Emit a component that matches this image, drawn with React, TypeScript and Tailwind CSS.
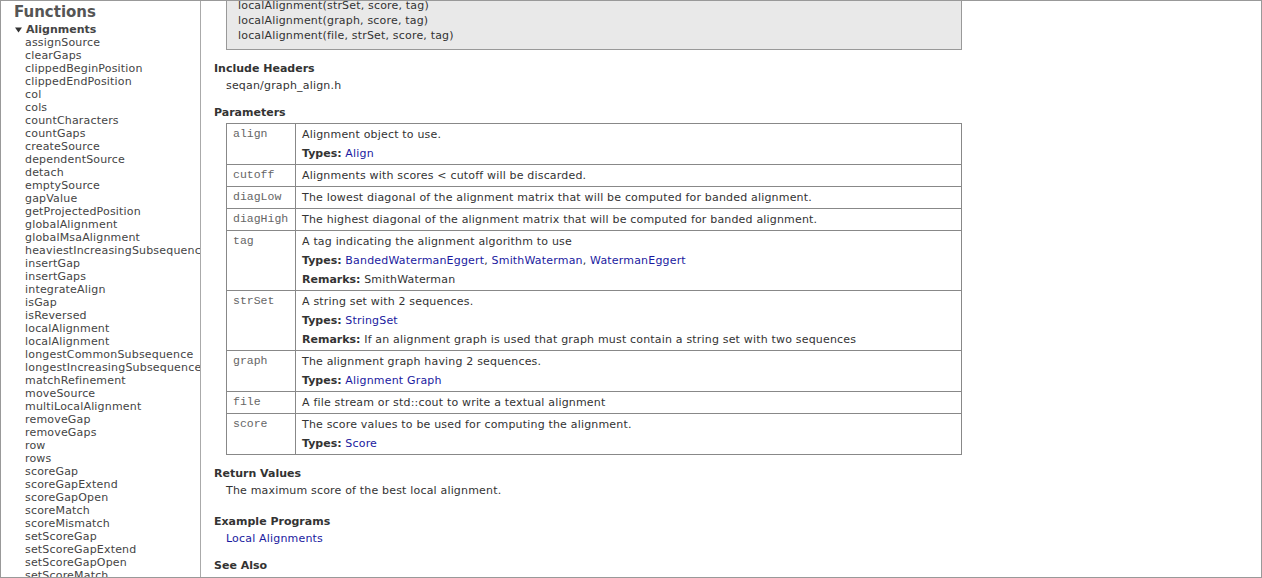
import React from "react";

const fns = [
  "assignSource",
  "clearGaps",
  "clippedBeginPosition",
  "clippedEndPosition",
  "col",
  "cols",
  "countCharacters",
  "countGaps",
  "createSource",
  "dependentSource",
  "detach",
  "emptySource",
  "gapValue",
  "getProjectedPosition",
  "globalAlignment",
  "globalMsaAlignment",
  "heaviestIncreasingSubsequence",
  "insertGap",
  "insertGaps",
  "integrateAlign",
  "isGap",
  "isReversed",
  "localAlignment",
  "localAlignment",
  "longestCommonSubsequence",
  "longestIncreasingSubsequence",
  "matchRefinement",
  "moveSource",
  "multiLocalAlignment",
  "removeGap",
  "removeGaps",
  "row",
  "rows",
  "scoreGap",
  "scoreGapExtend",
  "scoreGapOpen",
  "scoreMatch",
  "scoreMismatch",
  "setScoreGap",
  "setScoreGapExtend",
  "setScoreGapOpen",
  "setScoreMatch",
  "setScoreMismatch",
];

type Param = {
  name: string;
  desc: string;
  types?: string[];
  remarks?: string;
};

const params: Param[] = [
  { name: "align", desc: "Alignment object to use.", types: ["Align"] },
  { name: "cutoff", desc: "Alignments with scores < cutoff will be discarded." },
  {
    name: "diagLow",
    desc: "The lowest diagonal of the alignment matrix that will be computed for banded alignment.",
  },
  {
    name: "diagHigh",
    desc: "The highest diagonal of the alignment matrix that will be computed for banded alignment.",
  },
  {
    name: "tag",
    desc: "A tag indicating the alignment algorithm to use",
    types: ["BandedWatermanEggert", "SmithWaterman", "WatermanEggert"],
    remarks: "SmithWaterman",
  },
  {
    name: "strSet",
    desc: "A string set with 2 sequences.",
    types: ["StringSet"],
    remarks:
      "If an alignment graph is used that graph must contain a string set with two sequences",
  },
  {
    name: "graph",
    desc: "The alignment graph having 2 sequences.",
    types: ["Alignment Graph"],
  },
  { name: "file", desc: "A file stream or std::cout to write a textual alignment" },
  {
    name: "score",
    desc: "The score values to be used for computing the alignment.",
    types: ["Score"],
  },
];

const sans = "font-['DejaVu_Sans',Verdana,sans-serif]";

function Heading({ children, className }: { children: React.ReactNode; className: string }) {
  return (
    <h3 className={`font-bold text-[11px] leading-[14px] tracking-normal text-[#333] ${className}`}>
      {children}
    </h3>
  );
}

export default function App() {
  return (
    <div className={`flex h-[578px] w-full overflow-hidden border border-[#999] bg-white ${sans}`}>
      {/* sidebar */}
      <aside className="w-[200px] shrink-0 overflow-hidden border-r border-[#aaa] pl-[13px] pt-[2px] whitespace-nowrap">
        <h2 className="text-[15px] leading-[18px] font-bold text-[#555]">Functions</h2>
        <div className="mt-[2px] flex items-center text-[11px] leading-[13px] font-bold text-[#444]">
          <svg width="8" height="6" viewBox="0 0 8 6" className="ml-[1px] mr-[3px]">
            <path d="M0 0.5 L7 0.5 L3.5 5.5 Z" fill="#333" />
          </svg>
          Alignments
        </div>
        <ul className="pl-[11px] text-[11px] leading-[13px] tracking-[0.18px] text-[#444]">
          {fns.map((f, i) => (
            <li key={i}>{f}</li>
          ))}
        </ul>
      </aside>

      {/* main */}
      <main className="flex-1 overflow-hidden pl-[13px] text-[11px] tracking-[0.18px] text-[#333]">
        <div className="w-[748px]">
          <div className="ml-[12px] -mt-[26px] border border-[#999] bg-[#e9e9e9] pl-[11px] pt-[7px] pb-[6px] leading-[15px]">
            <div>localAlignment(align, score, tag)</div>
            <div>localAlignment(strSet, score, tag)</div>
            <div>localAlignment(graph, score, tag)</div>
            <div>localAlignment(file, strSet, score, tag)</div>
          </div>

          <Heading className="mt-[12px]">Include Headers</Heading>
          <p className="ml-[12px] mt-[3px] leading-[14px]">seqan/graph_align.h</p>

          <Heading className="mt-[13px]">Parameters</Heading>
          <table className="ml-[12px] mt-[3px] w-[736px] border-collapse leading-[13px]">
            <tbody>
              {params.map((p) => (
                <tr key={p.name}>
                  <td className="w-[69px] border border-[#888] px-[6px] pt-[3px] pb-[4px] align-top font-['Liberation_Mono',monospace] text-[11.5px] tracking-normal text-[#666]">
                    {p.name}
                  </td>
                  <td className="border border-[#888] px-[6px] pt-[4px] pb-[4px] align-top">
                    <div>{p.desc}</div>
                    {p.types && (
                      <div className="mt-[6px]">
                        <b className="tracking-normal">Types:</b>{" "}
                        {p.types.map((t, i) => (
                          <React.Fragment key={t}>
                            {i > 0 && ", "}
                            <a className="text-[#1a1aa0]">{t}</a>
                          </React.Fragment>
                        ))}
                      </div>
                    )}
                    {p.remarks && (
                      <div className="mt-[6px]">
                        <b className="tracking-normal">Remarks:</b> {p.remarks}
                      </div>
                    )}
                  </td>
                </tr>
              ))}
            </tbody>
          </table>

          <Heading className="mt-[12px]">Return Values</Heading>
          <p className="ml-[12px] mt-[3px] leading-[14px]">The maximum score of the best local alignment.</p>

          <Heading className="mt-[17px]">Example Programs</Heading>
          <p className="ml-[12px] mt-[3px] leading-[14px]">
            <a className="text-[#1a1aa0]">Local Alignments</a>
          </p>

          <Heading className="mt-[13px]">See Also</Heading>
        </div>
      </main>
    </div>
  );
}
